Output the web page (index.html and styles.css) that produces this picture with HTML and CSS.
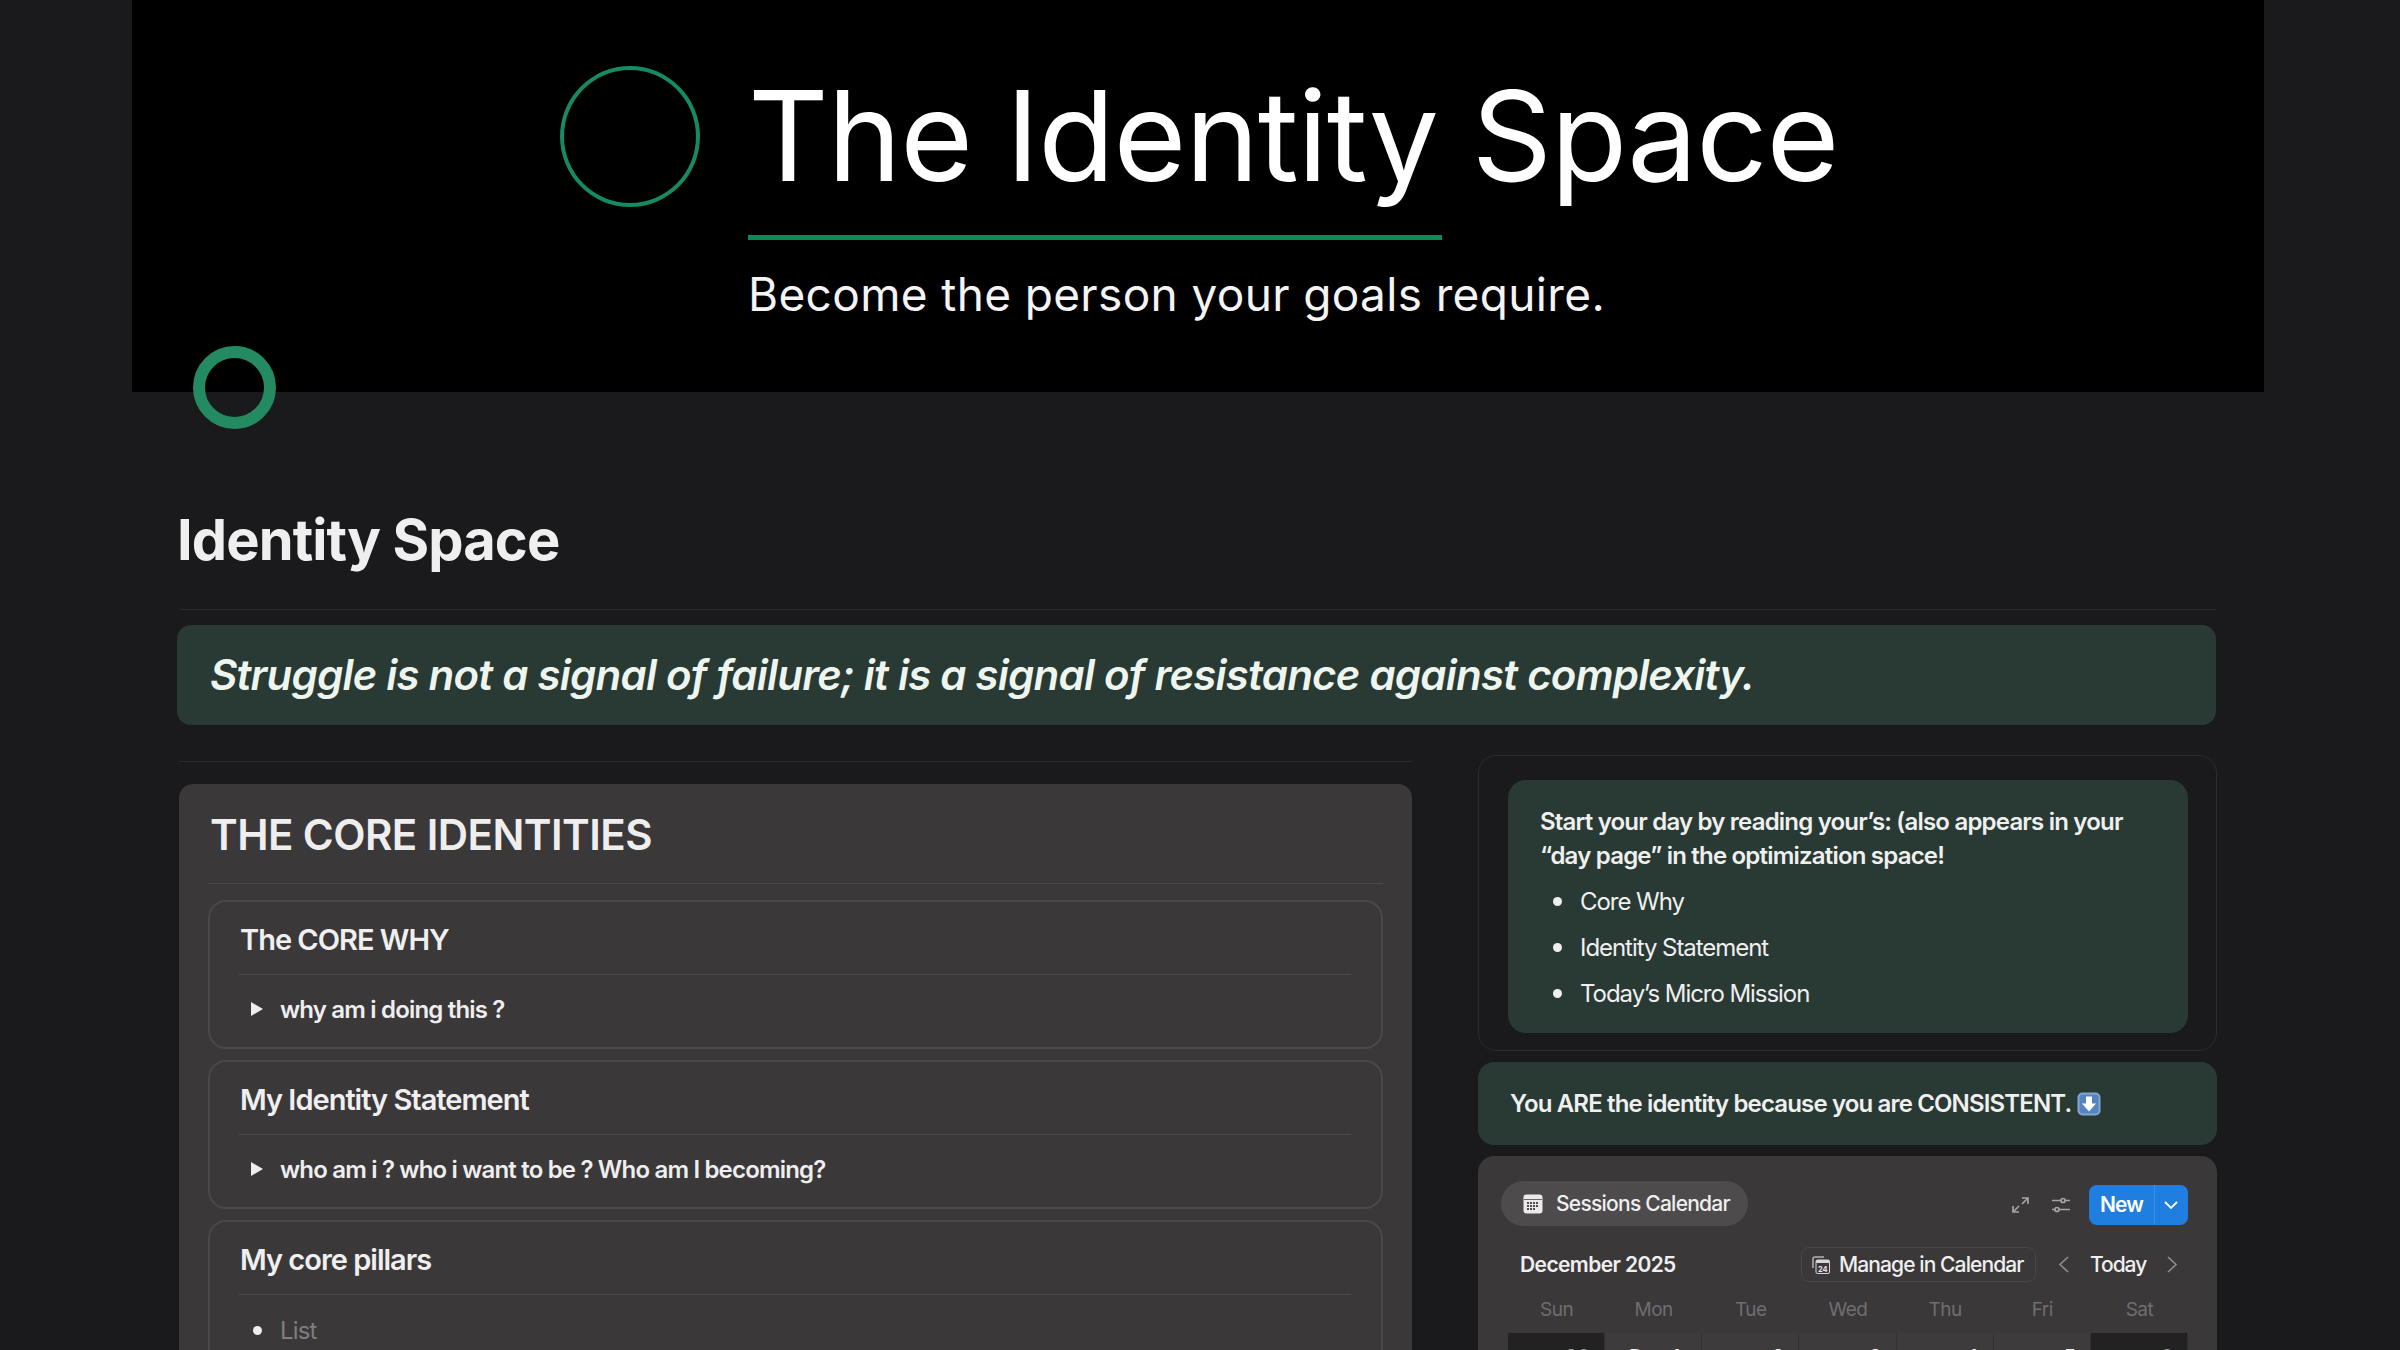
FILE: index.html
```html
<!DOCTYPE html>
<html lang="en">
<head>
    <meta charset="UTF-8">
    <meta name="viewport" content="width=device-width, initial-scale=1.0">
    <title>Identity Space</title>
    <link rel="stylesheet" href="styles.css">
</head>
<body>
    <header class="cover">
        <div class="cover-inner">
            <div class="cover-ring"></div>
            <div class="cover-text">
                <div class="cover-title">The Identity Space</div>
                <div class="cover-line"></div>
                <div class="cover-sub">Become the person your goals require.</div>
            </div>
        </div>
    </header>

    <main class="page">
        <div class="page-icon"></div>
        <h1 class="page-title">Identity Space</h1>
        <hr class="divider">
        <div class="quote">Struggle is not a signal of failure; it is a signal of resistance against complexity.</div>

        <div class="columns">
            <div class="left-col">
                <hr class="divider left-divider">
                <section class="core-card">
                    <h2>THE CORE IDENTITIES</h2>
                    <hr class="core-rule">

                    <div class="inner-card">
                        <h3>The CORE WHY</h3>
                        <hr class="inner-rule">
                        <div class="toggle"><span class="arrow"></span>why am i doing this ?</div>
                    </div>

                    <div class="inner-card">
                        <h3>My Identity Statement</h3>
                        <hr class="inner-rule">
                        <div class="toggle"><span class="arrow"></span>who am i ? who i want to be ? Who am I becoming?</div>
                    </div>

                    <div class="inner-card">
                        <h3>My core pillars</h3>
                        <hr class="inner-rule">
                        <div class="pillar"><span class="dot"></span>List</div>
                    </div>
                </section>
            </div>

            <div class="right-col">
                <div class="outline-box">
                    <div class="green-box">
                        <p>Start your day by reading your’s: (also appears in your “day page” in the optimization space!</p>
                        <ul>
                            <li>Core Why</li>
                            <li>Identity Statement</li>
                            <li>Today’s Micro Mission</li>
                        </ul>
                    </div>
                </div>

                <div class="consistent">
                    You ARE the identity because you are CONSISTENT.
                    <svg class="emoji" viewBox="0 0 24 24">
                        <rect x="0.500" y="0.500" width="23" height="23" rx="5" fill="#86a6cf"/>
                        <rect x="2.500" y="2.500" width="19" height="19" rx="3" fill="#5384c2"/>
                        <path d="M9 4.500h6v7h4L12 19.500 5 11.500h4z" fill="#fff"/>
                    </svg>
                </div>

                <section class="calendar">
                    <div class="cal-top">
                        <div class="cal-tab">
                            <svg class="cal-tab-icon" viewBox="0 0 20 20">
                                <rect x="0.500" y="0.500" width="19" height="19" rx="3" fill="#eceaea"/>
                                <rect x="1" y="5" width="18" height="1" fill="#6a6869"/>
                                <g fill="#4d4b4c">
                                    <rect x="4" y="8" width="2" height="2"/><rect x="7" y="8" width="2" height="2"/><rect x="10" y="8" width="2" height="2"/><rect x="13" y="8" width="2" height="2"/>
                                    <rect x="4" y="11" width="2" height="2"/><rect x="7" y="11" width="2" height="2"/><rect x="10" y="11" width="2" height="2"/><rect x="13" y="11" width="2" height="2"/>
                                    <rect x="4" y="14" width="2" height="2"/><rect x="7" y="14" width="2" height="2"/><rect x="10" y="14" width="2" height="2"/>
                                </g>
                            </svg>
                            Sessions Calendar
                        </div>
                        <div class="cal-actions">
                            <svg class="tool-icon expand-icon" viewBox="0 0 17 16">
                                <path d="M10 1h6v6M16 1L10 7M1 9v6h6M1 15l6-6"/>
                            </svg>
                            <svg class="tool-icon" viewBox="0 0 18 16">
                                <path d="M0 3.500h9M13 3.500h5M0 12.500h3M7 12.500h11"/>
                                <circle cx="11" cy="3.500" r="2"/>
                                <circle cx="5" cy="12.500" r="2"/>
                            </svg>
                            <div class="new-btn">
                                <span class="new-label">New</span>
                                <span class="new-caret">
                                    <svg viewBox="0 0 14 8"><path d="M1 1l6 6 6-6"/></svg>
                                </span>
                            </div>
                        </div>
                    </div>

                    <div class="cal-nav">
                        <div class="cal-month">December 2025</div>
                        <div class="cal-manage">
                            <svg class="manage-icon" viewBox="0 0 18 18">
                                <path d="M1 12V3a2 2 0 0 1 2-2h9" class="manage-back"/>
                                <rect x="4" y="4" width="13.500" height="13.500" rx="1.500" class="manage-page"/>
                                <rect x="4" y="4" width="13.500" height="3" rx="1" fill="#d8d6d6"/>
                                <text x="10.750" y="15.500" class="manage-num">24</text>
                            </svg>
                            Manage in Calendar
                        </div>
                        <svg class="chev" viewBox="0 0 11 17"><path d="M10 1L2 8.500l8 7.500"/></svg>
                        <div class="cal-today">Today</div>
                        <svg class="chev" viewBox="0 0 11 17"><path d="M1 1l8 7.500L1 16"/></svg>
                    </div>

                    <div class="cal-days">
                        <span>Sun</span><span>Mon</span><span>Tue</span><span>Wed</span><span>Thu</span><span>Fri</span><span>Sat</span>
                    </div>

                    <div class="cal-grid">
                        <div class="cal-cell weekend">30</div>
                        <div class="cal-cell first">Dec 1</div>
                        <div class="cal-cell">2</div>
                        <div class="cal-cell">3</div>
                        <div class="cal-cell">4</div>
                        <div class="cal-cell">5</div>
                        <div class="cal-cell weekend">6</div>
                    </div>
                </section>
            </div>
        </div>
    </main>
</body>
</html>
```

FILE: styles.css
```css
* {
    box-sizing: border-box;
}

html, body {
    height: 100%;
}

body {
    margin: 0;
    overflow: hidden;
    background-color: #1a191b;
    color: #f0eff0;
    font-family: Inter, "Liberation Sans", sans-serif;
}

hr {
    border: none;
    margin: 0;
}

/* Cover */
.cover {
    height: 392px;
    margin: 0 136px 0 132px;
    background-color: #000;
    padding: 66px 0 0 428px;
}

.cover-inner {
    display: flex;
    gap: 48px;
}

.cover-ring {
    width: 140px;
    height: 141px;
    flex-shrink: 0;
    border: 4px solid #168a62;
    border-radius: 50%;
}

.cover-title {
    font-size: 125px;
    line-height: 140px;
    letter-spacing: -1.2px;
    color: #fff;
    white-space: nowrap;
}

.cover-line {
    width: 694px;
    height: 5px;
    margin-top: 29px;
    background-color: #0c8a55;
}

.cover-sub {
    font-size: 46px;
    line-height: 60px;
    letter-spacing: 0.35px;
    margin-top: 24px;
    color: #f4f4f4;
}

/* Page */
.page {
    position: relative;
    padding: 114px 184px 0 177px;
}

.page-icon {
    position: absolute;
    left: 193px;
    top: -46px;
    width: 83px;
    height: 83px;
    border: 12px solid #248a62;
    border-radius: 50%;
}

.page-title {
    margin: 0;
    font-size: 56px;
    line-height: 68px;
    font-weight: 700;
    letter-spacing: -0.9px;
}

.divider {
    height: 1px;
    margin: 35px 0 0 3px;
    background-color: #2b2a2c;
}

.quote {
    height: 100px;
    margin-top: 15px;
    padding: 0 33px;
    border-radius: 14px;
    background-color: #283a33;
    font-size: 42px;
    line-height: 100px;
    font-weight: 600;
    font-style: italic;
    letter-spacing: -0.78px;
    color: #eef5ef;
}

.columns {
    display: flex;
    gap: 66px;
    margin-left: 2px;
}

.left-col {
    width: 1233px;
    flex-shrink: 0;
}

.left-divider {
    margin: 36px 0 0 0;
}

.right-col {
    width: 739px;
    padding-top: 30px;
}

/* Core identities card */
.core-card {
    margin-top: 22px;
    height: 700px;
    padding: 25px 29px 0;
    border-radius: 14px;
    background-color: #3a3839;
}

.core-card h2 {
    margin: 0 0 0 2px;
    font-size: 42px;
    line-height: 52px;
    font-weight: 600;
    letter-spacing: -0.55px;
    color: #efeeef;
}

.core-rule {
    height: 1px;
    margin-top: 22px;
    background-color: #4a4849;
}

.inner-card {
    height: 149px;
    margin-top: 11px;
    padding: 20px 30px 0 28px;
    border: 2px solid #4a4849;
    border-radius: 18px;
}

.core-rule + .inner-card {
    margin-top: 16px;
}

.inner-card:last-child {
    height: 300px;
}

.inner-card h3 {
    margin: 0 0 0 2px;
    font-size: 29px;
    line-height: 36px;
    font-weight: 600;
    letter-spacing: -1px;
}

.inner-rule {
    height: 1px;
    margin: 16px 0 0 0;
    background-color: #4a4849;
}

.toggle, .pillar {
    display: flex;
    align-items: center;
    height: 36px;
    margin-top: 16px;
    font-size: 24px;
    font-weight: 600;
    letter-spacing: -0.82px;
    color: #efeeef;
}

.arrow {
    width: 0;
    height: 0;
    margin: 0 17px 0 13px;
    border-top: 7px solid transparent;
    border-bottom: 7px solid transparent;
    border-left: 12px solid #efeeef;
}

.pillar {
    margin-top: 17px;
    font-weight: 400;
    color: #807e7f;
}

.dot {
    width: 9px;
    height: 9px;
    margin: 0 18px 0 15px;
    border-radius: 50%;
    background-color: #efeeef;
}

/* Right column */
.outline-box {
    height: 296px;
    padding: 24px 28px 0 29px;
    border: 1.500px solid #2c2b2d;
    border-radius: 18px;
}

.green-box {
    height: 253px;
    padding: 25px 32px 0;
    border-radius: 18px;
    background-color: #283a33;
    font-size: 24px;
    line-height: 34px;
    letter-spacing: -1.050px;
}

.green-box p {
    margin: 0;
    font-weight: 600;
    letter-spacing: -0.8px;
}

.green-box ul {
    list-style: none;
    margin: 6px 0 0;
    padding: 0 0 0 40px;
}

.green-box li {
    position: relative;
    line-height: 46px;
}

.green-box li::before {
    content: "";
    position: absolute;
    left: -27px;
    top: 18px;
    width: 9px;
    height: 9px;
    border-radius: 50%;
    background-color: #f0eff0;
}

.consistent {
    display: flex;
    align-items: center;
    height: 83px;
    margin-top: 11px;
    padding-left: 32px;
    border-radius: 16px;
    background-color: #283a33;
    font-size: 24px;
    font-weight: 600;
    letter-spacing: -0.85px;
    gap: 6px;
}

.emoji {
    width: 24px;
    height: 24px;
}

/* Calendar */
.calendar {
    height: 300px;
    margin-top: 11px;
    padding: 25px 29px 0 23px;
    border-radius: 16px;
    background-color: #3a3839;
}

.cal-top {
    display: flex;
    align-items: center;
    justify-content: space-between;
}

.cal-tab {
    display: flex;
    align-items: center;
    gap: 13px;
    height: 45px;
    padding: 0 18px 0 22px;
    border-radius: 23px;
    background-color: #4d4b4c;
    font-size: 21px;
    font-weight: 500;
    letter-spacing: -0.75px;
    color: #f0eff0;
}

.cal-tab-icon {
    width: 20px;
    height: 20px;
    flex-shrink: 0;
}

.cal-actions {
    display: flex;
    align-items: center;
    gap: 19px;
    margin-top: 3px;
}

.tool-icon {
    width: 18px;
    height: 16px;
    flex-shrink: 0;
    fill: none;
    stroke: #a5a3a4;
    stroke-width: 1.700;
}

.expand-icon {
    width: 17px;
    margin-right: 4px;
}

.new-btn {
    display: flex;
    height: 40px;
    border-radius: 8px;
    background-color: #1f7ee0;
    overflow: hidden;
    font-size: 21px;
    font-weight: 600;
    letter-spacing: -0.9px;
    color: #fff;
}

.new-label {
    width: 65px;
    line-height: 40px;
    text-align: center;
}

.new-caret {
    display: flex;
    align-items: center;
    justify-content: center;
    width: 34px;
    border-left: 1px solid #3b8fe8;
}

.new-caret svg {
    width: 14px;
    height: 8px;
    fill: none;
    stroke: #fff;
    stroke-width: 1.800;
}

.cal-nav {
    display: flex;
    align-items: center;
    margin-top: 21px;
    padding-left: 19px;
    height: 35px;
}

.cal-month {
    width: 281px;
    font-size: 21px;
    font-weight: 600;
    letter-spacing: -0.6px;
}

.cal-manage {
    display: flex;
    align-items: center;
    gap: 9px;
    width: 235px;
    height: 35px;
    padding-left: 10px;
    border: 1px solid #484647;
    border-radius: 8px;
    font-size: 21px;
    font-weight: 500;
    letter-spacing: -0.9px;
    white-space: nowrap;
}

.manage-icon {
    width: 18px;
    height: 18px;
    flex-shrink: 0;
}

.manage-back {
    fill: none;
    stroke: #b5b3b4;
    stroke-width: 1.500;
}

.manage-page {
    fill: #3a3839;
    stroke: #d8d6d6;
    stroke-width: 1;
}

.manage-num {
    font-size: 7.500px;
    font-weight: 700;
    letter-spacing: 0;
    text-anchor: middle;
    fill: #e8e6e6;
}

.chev {
    width: 11px;
    height: 17px;
    margin-left: 22px;
    flex-shrink: 0;
    fill: none;
    stroke: #8f8d8e;
    stroke-width: 1.600;
}

.cal-today {
    margin-left: 21px;
    font-size: 21px;
    font-weight: 500;
    letter-spacing: -1.050px;
}

.cal-today + .chev {
    margin-left: 21px;
}

.cal-days {
    display: grid;
    grid-template-columns: repeat(7, 97.150px);
    margin: 16px 0 0 7px;
    font-size: 19px;
    line-height: 24px;
    letter-spacing: -0.5px;
    color: #706e6f;
    text-align: center;
}

.cal-grid {
    display: grid;
    grid-template-columns: repeat(7, 97.150px);
    margin: 11px 0 0 7px;
}

.cal-cell {
    height: 100px;
    padding: 12px 14px 0 0;
    border-right: 1px solid #333233;
    background-color: #3d3b3c;
    text-align: right;
    font-size: 20px;
    line-height: 24px;
    font-weight: 500;
}

.cal-cell.first {
    padding-right: 21px;
}

.cal-cell.weekend {
    background-color: #232223;
    color: #a09e9f;
}
```
